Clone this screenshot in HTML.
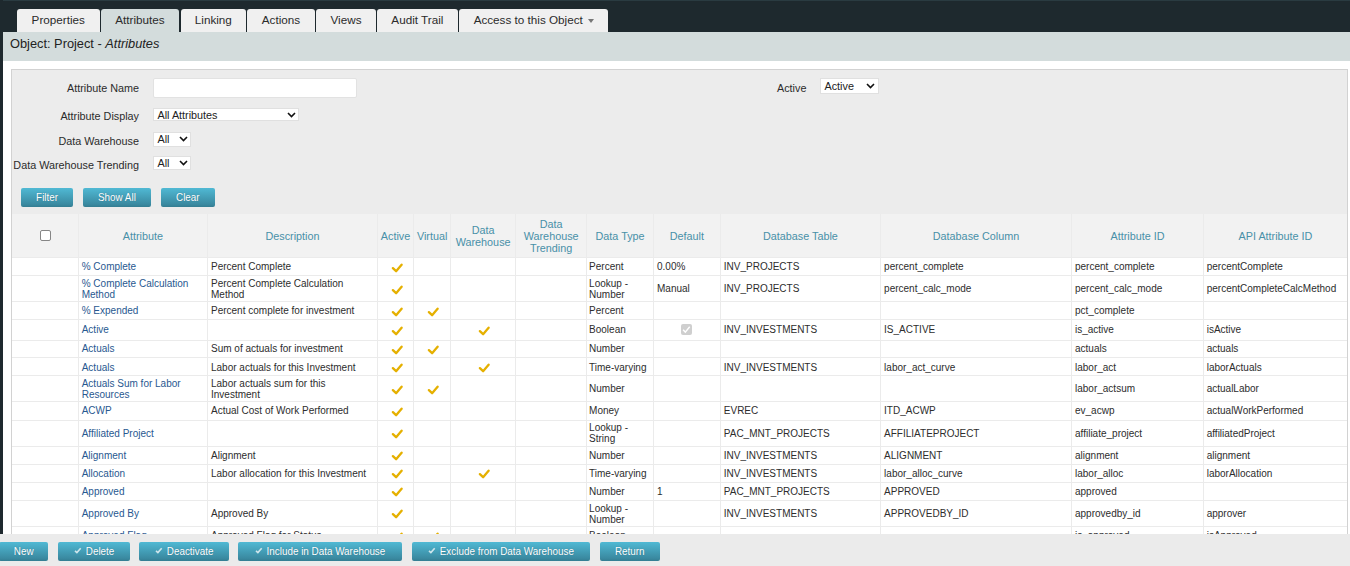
<!DOCTYPE html><html><head><meta charset="utf-8"><style>
*{margin:0;padding:0;box-sizing:border-box}
html,body{width:1350px;height:566px;overflow:hidden;background:#fff;font-family:"Liberation Sans",sans-serif;color:#2d2d2d}
.a{position:absolute}
.tab{position:absolute;top:9px;height:23px;background:#f0f0f0;border-radius:3px 3px 0 0;font-size:11.7px;color:#2b2b2b;text-align:center;line-height:22px;white-space:nowrap}
.lbl{position:absolute;font-size:10.8px;color:#2b2b2b;white-space:nowrap;line-height:12px}
.sel{position:absolute;background:#fff;border:1px solid #e0e0e0;font-size:10.8px;color:#222;white-space:nowrap;line-height:12px}
.bt{display:inline-block;position:relative;top:1px;transform:scaleY(1.15);transform-origin:50% 70%}
.btn{position:absolute;height:19px;border-radius:2px;background:linear-gradient(#50b9d4,#3a8aa1 85%,#347d92);color:#fff;font-size:9.9px;text-align:center;line-height:18px;white-space:nowrap;text-shadow:0 0 1px rgba(0,40,60,.35)}
.hc{position:absolute;display:flex;align-items:center;justify-content:center;text-align:center;font-size:10.8px;line-height:12px;color:#4890a8}
.c{position:absolute;display:flex;align-items:center;font-size:10px;line-height:11px;color:#2d2d2d;padding-left:3.5px;white-space:nowrap;overflow:hidden}
.lk{color:#285890}
.vl{position:absolute;width:1px;background:#ebebeb}
.hl{position:absolute;height:1px;background:#ebebeb}
.chk{position:absolute;width:12px;height:10px}
</style></head><body>
<div class="a" style="left:0;top:0;width:1350px;height:32px;background:#1e292e"></div>
<div class="a" style="left:0;top:0;width:1350px;height:1px;background:#2a3b41"></div>
<div class="a" style="left:0;top:0;width:3px;height:534px;background:#1e292e"></div>
<div class="tab" style="left:17px;width:82.5px;background:#f0f0f0">Properties</div>
<div class="tab" style="left:101px;width:78px;background:#d3dcdc">Attributes</div>
<div class="tab" style="left:180.7px;width:65.30000000000001px;background:#f0f0f0">Linking</div>
<div class="tab" style="left:247px;width:68px;background:#f0f0f0">Actions</div>
<div class="tab" style="left:316px;width:60px;background:#f0f0f0">Views</div>
<div class="tab" style="left:377px;width:80.69999999999999px;background:#f0f0f0">Audit Trail</div>
<div class="tab" style="left:459px;width:149.39999999999998px;background:#f0f0f0">Access to this Object<span style="display:inline-block;width:0;height:0;border-left:3.5px solid transparent;border-right:3.5px solid transparent;border-top:4px solid #777;margin-left:5px;vertical-align:1.3px"></span></div>
<div class="a" style="left:3px;top:32px;width:1347px;height:29px;background:#d3dcdc"></div>
<div class="a" style="left:10px;top:37px;font-size:12.8px;line-height:14px;color:#222;white-space:nowrap">Object: Project - <i>Attributes</i></div>
<div class="a" style="left:11px;top:69px;width:1337px;height:480px;background:#ececec;border:1px solid #d2d2d2"></div>
<div class="lbl" style="right:1211px;top:81.89999999999999px">Attribute Name</div>
<div class="lbl" style="right:1211px;top:110.1px">Attribute Display</div>
<div class="lbl" style="right:1211px;top:134.9px">Data Warehouse</div>
<div class="lbl" style="right:1211px;top:158.79999999999998px">Data Warehouse Trending</div>
<div class="lbl" style="left:777px;top:81.8px">Active</div>
<div class="a" style="left:152.5px;top:78px;width:204.5px;height:19.5px;background:#fff;border:1px solid #e2e2e2;border-radius:2px"></div>
<div class="sel" style="left:153px;top:107.6px;width:146.39999999999998px;height:13.900000000000006px"><span class="a" style="left:3.5px;top:-0.04999999999999716px">All Attributes</span></div>
<svg class="a" style="left:287.2px;top:111.55px" width="9" height="6" viewBox="0 0 9 6"><path d="M1 1 L4.5 4.5 L8 1" fill="none" stroke="#111" stroke-width="1.6"/></svg>
<div class="sel" style="left:153px;top:131.8px;width:38.400000000000006px;height:14.899999999999977px"><span class="a" style="left:3.5px;top:0.44999999999998863px">All</span></div>
<svg class="a" style="left:179px;top:136.25px" width="9" height="6" viewBox="0 0 9 6"><path d="M1 1 L4.5 4.5 L8 1" fill="none" stroke="#111" stroke-width="1.6"/></svg>
<div class="sel" style="left:153px;top:156px;width:38.400000000000006px;height:14.300000000000011px"><span class="a" style="left:3.5px;top:0.15000000000000568px">All</span></div>
<svg class="a" style="left:179px;top:160.15px" width="9" height="6" viewBox="0 0 9 6"><path d="M1 1 L4.5 4.5 L8 1" fill="none" stroke="#111" stroke-width="1.6"/></svg>
<div class="sel" style="left:820px;top:78px;width:58.5px;height:15.5px"><span class="a" style="left:3.5px;top:0.75px">Active</span></div>
<svg class="a" style="left:865.8px;top:82.75px" width="9" height="6" viewBox="0 0 9 6"><path d="M1 1 L4.5 4.5 L8 1" fill="none" stroke="#111" stroke-width="1.6"/></svg>
<div class="btn" style="left:21.1px;top:188px;width:51.99999999999999px"><span class="bt">Filter</span></div>
<div class="btn" style="left:82.8px;top:188px;width:68.2px"><span class="bt">Show All</span></div>
<div class="btn" style="left:160.7px;top:188px;width:54.30000000000001px"><span class="bt">Clear</span></div>
<div class="a" style="left:12px;top:214px;width:1335px;height:43.5px;background:#f2f2f2"></div>
<div class="a" style="left:12px;top:257.5px;width:1335px;height:276.5px;background:#fff"></div>
<div class="a" style="left:39.6px;top:230px;width:11.3px;height:11px;border:1px solid #868686;border-radius:2px;background:#fff"></div>
<div class="hc" style="left:78.2px;top:214px;width:129.3px;height:43.5px">Attribute</div>
<div class="hc" style="left:207.5px;top:214px;width:170.0px;height:43.5px">Description</div>
<div class="hc" style="left:377.5px;top:214px;width:36.10000000000002px;height:43.5px">Active</div>
<div class="hc" style="left:413.6px;top:214px;width:37.099999999999966px;height:43.5px">Virtual</div>
<div class="hc" style="left:450.7px;top:214px;width:64.90000000000003px;height:43.5px">Data<br>Warehouse</div>
<div class="hc" style="left:515.6px;top:214px;width:71.10000000000002px;height:43.5px">Data<br>Warehouse<br>Trending</div>
<div class="hc" style="left:586.7px;top:214px;width:66.79999999999995px;height:43.5px">Data Type</div>
<div class="hc" style="left:653.5px;top:214px;width:66.79999999999995px;height:43.5px">Default</div>
<div class="hc" style="left:720.3px;top:214px;width:160.30000000000007px;height:43.5px">Database Table</div>
<div class="hc" style="left:880.6px;top:214px;width:190.89999999999998px;height:43.5px">Database Column</div>
<div class="hc" style="left:1071.5px;top:214px;width:132.0px;height:43.5px">Attribute ID</div>
<div class="hc" style="left:1203.5px;top:214px;width:144.0px;height:43.5px">API Attribute ID</div>
<div class="c lk" style="left:78.2px;top:257.5px;width:129.3px;height:18.0px;padding-left:3.5px"><span>% Complete</span></div><div class="c" style="left:207.5px;top:257.5px;width:170.0px;height:18.0px;padding-left:3.5px"><span>Percent Complete</span></div><svg class="a" style="left:390.75px;top:262.5px" width="12" height="10" viewBox="0 0 12 10"><path d="M1.9 5.1 L5.1 8.2 L10.6 1.7" fill="none" stroke="#e5b000" stroke-width="2.3" stroke-linecap="round" stroke-linejoin="round"/></svg><div class="c" style="left:586.7px;top:257.5px;width:66.79999999999995px;height:18.0px;padding-left:2.4px"><span>Percent</span></div><div class="c" style="left:653.5px;top:257.5px;width:66.79999999999995px;height:18.0px;padding-left:3.5px"><span>0.00%</span></div><div class="c" style="left:720.3px;top:257.5px;width:160.30000000000007px;height:18.0px;padding-left:3.5px"><span>INV_PROJECTS</span></div><div class="c" style="left:880.6px;top:257.5px;width:190.89999999999998px;height:18.0px;padding-left:3.5px"><span>percent_complete</span></div><div class="c" style="left:1071.5px;top:257.5px;width:132.0px;height:18.0px;padding-left:3.5px"><span>percent_complete</span></div><div class="c" style="left:1203.5px;top:257.5px;width:144.0px;height:18.0px;padding-left:3.2px"><span>percentComplete</span></div><div class="c lk" style="left:78.2px;top:275.5px;width:129.3px;height:26.0px;padding-left:3.5px"><span>% Complete Calculation<br>Method</span></div><div class="c" style="left:207.5px;top:275.5px;width:170.0px;height:26.0px;padding-left:3.5px"><span>Percent Complete Calculation<br>Method</span></div><svg class="a" style="left:390.75px;top:284.5px" width="12" height="10" viewBox="0 0 12 10"><path d="M1.9 5.1 L5.1 8.2 L10.6 1.7" fill="none" stroke="#e5b000" stroke-width="2.3" stroke-linecap="round" stroke-linejoin="round"/></svg><div class="c" style="left:586.7px;top:275.5px;width:66.79999999999995px;height:26.0px;padding-left:2.4px"><span>Lookup -<br>Number</span></div><div class="c" style="left:653.5px;top:275.5px;width:66.79999999999995px;height:26.0px;padding-left:3.5px"><span>Manual</span></div><div class="c" style="left:720.3px;top:275.5px;width:160.30000000000007px;height:26.0px;padding-left:3.5px"><span>INV_PROJECTS</span></div><div class="c" style="left:880.6px;top:275.5px;width:190.89999999999998px;height:26.0px;padding-left:3.5px"><span>percent_calc_mode</span></div><div class="c" style="left:1071.5px;top:275.5px;width:132.0px;height:26.0px;padding-left:3.5px"><span>percent_calc_mode</span></div><div class="c" style="left:1203.5px;top:275.5px;width:144.0px;height:26.0px;padding-left:3.2px"><span>percentCompleteCalcMethod</span></div><div class="c lk" style="left:78.2px;top:301.5px;width:129.3px;height:18.0px;padding-left:3.5px"><span>% Expended</span></div><div class="c" style="left:207.5px;top:301.5px;width:170.0px;height:18.0px;padding-left:3.5px"><span>Percent complete for investment</span></div><svg class="a" style="left:390.75px;top:306.5px" width="12" height="10" viewBox="0 0 12 10"><path d="M1.9 5.1 L5.1 8.2 L10.6 1.7" fill="none" stroke="#e5b000" stroke-width="2.3" stroke-linecap="round" stroke-linejoin="round"/></svg><svg class="a" style="left:427.34999999999997px;top:306.5px" width="12" height="10" viewBox="0 0 12 10"><path d="M1.9 5.1 L5.1 8.2 L10.6 1.7" fill="none" stroke="#e5b000" stroke-width="2.3" stroke-linecap="round" stroke-linejoin="round"/></svg><div class="c" style="left:586.7px;top:301.5px;width:66.79999999999995px;height:18.0px;padding-left:2.4px"><span>Percent</span></div><div class="c" style="left:1071.5px;top:301.5px;width:132.0px;height:18.0px;padding-left:3.5px"><span>pct_complete</span></div><div class="c lk" style="left:78.2px;top:318.7px;width:129.3px;height:21.0px;padding-left:3.5px"><span>Active</span></div><svg class="a" style="left:390.75px;top:326.0px" width="12" height="10" viewBox="0 0 12 10"><path d="M1.9 5.1 L5.1 8.2 L10.6 1.7" fill="none" stroke="#e5b000" stroke-width="2.3" stroke-linecap="round" stroke-linejoin="round"/></svg><svg class="a" style="left:478.34999999999997px;top:326.0px" width="12" height="10" viewBox="0 0 12 10"><path d="M1.9 5.1 L5.1 8.2 L10.6 1.7" fill="none" stroke="#e5b000" stroke-width="2.3" stroke-linecap="round" stroke-linejoin="round"/></svg><div class="c" style="left:586.7px;top:318.7px;width:66.79999999999995px;height:21.0px;padding-left:2.4px"><span>Boolean</span></div><div class="a" style="left:681px;top:323.7px;width:11px;height:11px;background:#cfcfcf;border-radius:2px"></div><svg class="a" style="left:681px;top:323.7px" width="11" height="11" viewBox="0 0 11 11"><path d="M2.1 5.8 L4.3 8.1 L8.7 2.7" fill="none" stroke="#fff" stroke-width="1.4"/></svg><div class="c" style="left:720.3px;top:318.7px;width:160.30000000000007px;height:21.0px;padding-left:3.5px"><span>INV_INVESTMENTS</span></div><div class="c" style="left:880.6px;top:318.7px;width:190.89999999999998px;height:21.0px;padding-left:3.5px"><span>IS_ACTIVE</span></div><div class="c" style="left:1071.5px;top:318.7px;width:132.0px;height:21.0px;padding-left:3.5px"><span>is_active</span></div><div class="c" style="left:1203.5px;top:318.7px;width:144.0px;height:21.0px;padding-left:3.2px"><span>isActive</span></div><div class="c lk" style="left:78.2px;top:340.0px;width:129.3px;height:17.19999999999999px;padding-left:3.5px"><span>Actuals</span></div><div class="c" style="left:207.5px;top:340.0px;width:170.0px;height:17.19999999999999px;padding-left:3.5px"><span>Sum of actuals for investment</span></div><svg class="a" style="left:390.75px;top:345.1px" width="12" height="10" viewBox="0 0 12 10"><path d="M1.9 5.1 L5.1 8.2 L10.6 1.7" fill="none" stroke="#e5b000" stroke-width="2.3" stroke-linecap="round" stroke-linejoin="round"/></svg><svg class="a" style="left:427.34999999999997px;top:345.1px" width="12" height="10" viewBox="0 0 12 10"><path d="M1.9 5.1 L5.1 8.2 L10.6 1.7" fill="none" stroke="#e5b000" stroke-width="2.3" stroke-linecap="round" stroke-linejoin="round"/></svg><div class="c" style="left:586.7px;top:340.0px;width:66.79999999999995px;height:17.19999999999999px;padding-left:2.4px"><span>Number</span></div><div class="c" style="left:1071.5px;top:340.0px;width:132.0px;height:17.19999999999999px;padding-left:3.5px"><span>actuals</span></div><div class="c" style="left:1203.5px;top:340.0px;width:144.0px;height:17.19999999999999px;padding-left:3.2px"><span>actuals</span></div><div class="c lk" style="left:78.2px;top:358.2px;width:129.3px;height:17.80000000000001px;padding-left:3.5px"><span>Actuals</span></div><div class="c" style="left:207.5px;top:358.2px;width:170.0px;height:17.80000000000001px;padding-left:3.5px"><span>Labor actuals for this Investment</span></div><svg class="a" style="left:390.75px;top:362.6px" width="12" height="10" viewBox="0 0 12 10"><path d="M1.9 5.1 L5.1 8.2 L10.6 1.7" fill="none" stroke="#e5b000" stroke-width="2.3" stroke-linecap="round" stroke-linejoin="round"/></svg><svg class="a" style="left:478.34999999999997px;top:362.6px" width="12" height="10" viewBox="0 0 12 10"><path d="M1.9 5.1 L5.1 8.2 L10.6 1.7" fill="none" stroke="#e5b000" stroke-width="2.3" stroke-linecap="round" stroke-linejoin="round"/></svg><div class="c" style="left:586.7px;top:358.2px;width:66.79999999999995px;height:17.80000000000001px;padding-left:2.4px"><span>Time-varying</span></div><div class="c" style="left:720.3px;top:358.2px;width:160.30000000000007px;height:17.80000000000001px;padding-left:3.5px"><span>INV_INVESTMENTS</span></div><div class="c" style="left:880.6px;top:358.2px;width:190.89999999999998px;height:17.80000000000001px;padding-left:3.5px"><span>labor_act_curve</span></div><div class="c" style="left:1071.5px;top:358.2px;width:132.0px;height:17.80000000000001px;padding-left:3.5px"><span>labor_act</span></div><div class="c" style="left:1203.5px;top:358.2px;width:144.0px;height:17.80000000000001px;padding-left:3.2px"><span>laborActuals</span></div><div class="c lk" style="left:78.2px;top:375.5px;width:129.3px;height:26.0px;padding-left:3.5px"><span>Actuals Sum for Labor<br>Resources</span></div><div class="c" style="left:207.5px;top:375.5px;width:170.0px;height:26.0px;padding-left:3.5px"><span>Labor actuals sum for this<br>Investment</span></div><svg class="a" style="left:390.75px;top:384.5px" width="12" height="10" viewBox="0 0 12 10"><path d="M1.9 5.1 L5.1 8.2 L10.6 1.7" fill="none" stroke="#e5b000" stroke-width="2.3" stroke-linecap="round" stroke-linejoin="round"/></svg><svg class="a" style="left:427.34999999999997px;top:384.5px" width="12" height="10" viewBox="0 0 12 10"><path d="M1.9 5.1 L5.1 8.2 L10.6 1.7" fill="none" stroke="#e5b000" stroke-width="2.3" stroke-linecap="round" stroke-linejoin="round"/></svg><div class="c" style="left:586.7px;top:375.5px;width:66.79999999999995px;height:26.0px;padding-left:2.4px"><span>Number</span></div><div class="c" style="left:1071.5px;top:375.5px;width:132.0px;height:26.0px;padding-left:3.5px"><span>labor_actsum</span></div><div class="c" style="left:1203.5px;top:375.5px;width:144.0px;height:26.0px;padding-left:3.2px"><span>actualLabor</span></div><div class="c lk" style="left:78.2px;top:401.2px;width:129.3px;height:18.5px;padding-left:3.5px"><span>ACWP</span></div><div class="c" style="left:207.5px;top:401.2px;width:170.0px;height:18.5px;padding-left:3.5px"><span>Actual Cost of Work Performed</span></div><svg class="a" style="left:390.75px;top:406.75px" width="12" height="10" viewBox="0 0 12 10"><path d="M1.9 5.1 L5.1 8.2 L10.6 1.7" fill="none" stroke="#e5b000" stroke-width="2.3" stroke-linecap="round" stroke-linejoin="round"/></svg><div class="c" style="left:586.7px;top:401.2px;width:66.79999999999995px;height:18.5px;padding-left:2.4px"><span>Money</span></div><div class="c" style="left:720.3px;top:401.2px;width:160.30000000000007px;height:18.5px;padding-left:3.5px"><span>EVREC</span></div><div class="c" style="left:880.6px;top:401.2px;width:190.89999999999998px;height:18.5px;padding-left:3.5px"><span>ITD_ACWP</span></div><div class="c" style="left:1071.5px;top:401.2px;width:132.0px;height:18.5px;padding-left:3.5px"><span>ev_acwp</span></div><div class="c" style="left:1203.5px;top:401.2px;width:144.0px;height:18.5px;padding-left:3.2px"><span>actualWorkPerformed</span></div><div class="c lk" style="left:78.2px;top:420px;width:129.3px;height:26.399999999999977px;padding-left:3.5px"><span>Affiliated Project</span></div><svg class="a" style="left:390.75px;top:429.2px" width="12" height="10" viewBox="0 0 12 10"><path d="M1.9 5.1 L5.1 8.2 L10.6 1.7" fill="none" stroke="#e5b000" stroke-width="2.3" stroke-linecap="round" stroke-linejoin="round"/></svg><div class="c" style="left:586.7px;top:420px;width:66.79999999999995px;height:26.399999999999977px;padding-left:2.4px"><span>Lookup -<br>String</span></div><div class="c" style="left:720.3px;top:420px;width:160.30000000000007px;height:26.399999999999977px;padding-left:3.5px"><span>PAC_MNT_PROJECTS</span></div><div class="c" style="left:880.6px;top:420px;width:190.89999999999998px;height:26.399999999999977px;padding-left:3.5px"><span>AFFILIATEPROJECT</span></div><div class="c" style="left:1071.5px;top:420px;width:132.0px;height:26.399999999999977px;padding-left:3.5px"><span>affiliate_project</span></div><div class="c" style="left:1203.5px;top:420px;width:144.0px;height:26.399999999999977px;padding-left:3.2px"><span>affiliatedProject</span></div><div class="c lk" style="left:78.2px;top:446.4px;width:129.3px;height:17.600000000000023px;padding-left:3.5px"><span>Alignment</span></div><div class="c" style="left:207.5px;top:446.4px;width:170.0px;height:17.600000000000023px;padding-left:3.5px"><span>Alignment</span></div><svg class="a" style="left:390.75px;top:451.2px" width="12" height="10" viewBox="0 0 12 10"><path d="M1.9 5.1 L5.1 8.2 L10.6 1.7" fill="none" stroke="#e5b000" stroke-width="2.3" stroke-linecap="round" stroke-linejoin="round"/></svg><div class="c" style="left:586.7px;top:446.4px;width:66.79999999999995px;height:17.600000000000023px;padding-left:2.4px"><span>Number</span></div><div class="c" style="left:720.3px;top:446.4px;width:160.30000000000007px;height:17.600000000000023px;padding-left:3.5px"><span>INV_INVESTMENTS</span></div><div class="c" style="left:880.6px;top:446.4px;width:190.89999999999998px;height:17.600000000000023px;padding-left:3.5px"><span>ALIGNMENT</span></div><div class="c" style="left:1071.5px;top:446.4px;width:132.0px;height:17.600000000000023px;padding-left:3.5px"><span>alignment</span></div><div class="c" style="left:1203.5px;top:446.4px;width:144.0px;height:17.600000000000023px;padding-left:3.2px"><span>alignment</span></div><div class="c lk" style="left:78.2px;top:464px;width:129.3px;height:18px;padding-left:3.5px"><span>Allocation</span></div><div class="c" style="left:207.5px;top:464px;width:170.0px;height:18px;padding-left:3.5px"><span>Labor allocation for this Investment</span></div><svg class="a" style="left:390.75px;top:469.0px" width="12" height="10" viewBox="0 0 12 10"><path d="M1.9 5.1 L5.1 8.2 L10.6 1.7" fill="none" stroke="#e5b000" stroke-width="2.3" stroke-linecap="round" stroke-linejoin="round"/></svg><svg class="a" style="left:478.34999999999997px;top:469.0px" width="12" height="10" viewBox="0 0 12 10"><path d="M1.9 5.1 L5.1 8.2 L10.6 1.7" fill="none" stroke="#e5b000" stroke-width="2.3" stroke-linecap="round" stroke-linejoin="round"/></svg><div class="c" style="left:586.7px;top:464px;width:66.79999999999995px;height:18px;padding-left:2.4px"><span>Time-varying</span></div><div class="c" style="left:720.3px;top:464px;width:160.30000000000007px;height:18px;padding-left:3.5px"><span>INV_INVESTMENTS</span></div><div class="c" style="left:880.6px;top:464px;width:190.89999999999998px;height:18px;padding-left:3.5px"><span>labor_alloc_curve</span></div><div class="c" style="left:1071.5px;top:464px;width:132.0px;height:18px;padding-left:3.5px"><span>labor_alloc</span></div><div class="c" style="left:1203.5px;top:464px;width:144.0px;height:18px;padding-left:3.2px"><span>laborAllocation</span></div><div class="c lk" style="left:78.2px;top:482.5px;width:129.3px;height:18px;padding-left:3.5px"><span>Approved</span></div><svg class="a" style="left:390.75px;top:487.0px" width="12" height="10" viewBox="0 0 12 10"><path d="M1.9 5.1 L5.1 8.2 L10.6 1.7" fill="none" stroke="#e5b000" stroke-width="2.3" stroke-linecap="round" stroke-linejoin="round"/></svg><div class="c" style="left:586.7px;top:482.5px;width:66.79999999999995px;height:18px;padding-left:2.4px"><span>Number</span></div><div class="c" style="left:653.5px;top:482.5px;width:66.79999999999995px;height:18px;padding-left:3.5px"><span>1</span></div><div class="c" style="left:720.3px;top:482.5px;width:160.30000000000007px;height:18px;padding-left:3.5px"><span>PAC_MNT_PROJECTS</span></div><div class="c" style="left:880.6px;top:482.5px;width:190.89999999999998px;height:18px;padding-left:3.5px"><span>APPROVED</span></div><div class="c" style="left:1071.5px;top:482.5px;width:132.0px;height:18px;padding-left:3.5px"><span>approved</span></div><div class="c lk" style="left:78.2px;top:500.5px;width:129.3px;height:26.5px;padding-left:3.5px"><span>Approved By</span></div><div class="c" style="left:207.5px;top:500.5px;width:170.0px;height:26.5px;padding-left:3.5px"><span>Approved By</span></div><svg class="a" style="left:390.75px;top:509.25px" width="12" height="10" viewBox="0 0 12 10"><path d="M1.9 5.1 L5.1 8.2 L10.6 1.7" fill="none" stroke="#e5b000" stroke-width="2.3" stroke-linecap="round" stroke-linejoin="round"/></svg><div class="c" style="left:586.7px;top:500.5px;width:66.79999999999995px;height:26.5px;padding-left:2.4px"><span>Lookup -<br>Number</span></div><div class="c" style="left:720.3px;top:500.5px;width:160.30000000000007px;height:26.5px;padding-left:3.5px"><span>INV_INVESTMENTS</span></div><div class="c" style="left:880.6px;top:500.5px;width:190.89999999999998px;height:26.5px;padding-left:3.5px"><span>APPROVEDBY_ID</span></div><div class="c" style="left:1071.5px;top:500.5px;width:132.0px;height:26.5px;padding-left:3.5px"><span>approvedby_id</span></div><div class="c" style="left:1203.5px;top:500.5px;width:144.0px;height:26.5px;padding-left:3.2px"><span>approver</span></div><div class="c lk" style="left:78.2px;top:526.5px;width:129.3px;height:18.5px;padding-left:3.5px"><span>Approved Flag</span></div><div class="c" style="left:207.5px;top:526.5px;width:170.0px;height:18.5px;padding-left:3.5px"><span>Approved Flag for Status</span></div><svg class="a" style="left:390.75px;top:531.75px" width="12" height="10" viewBox="0 0 12 10"><path d="M1.9 5.1 L5.1 8.2 L10.6 1.7" fill="none" stroke="#e5b000" stroke-width="2.3" stroke-linecap="round" stroke-linejoin="round"/></svg><svg class="a" style="left:427.34999999999997px;top:531.75px" width="12" height="10" viewBox="0 0 12 10"><path d="M1.9 5.1 L5.1 8.2 L10.6 1.7" fill="none" stroke="#e5b000" stroke-width="2.3" stroke-linecap="round" stroke-linejoin="round"/></svg><div class="c" style="left:586.7px;top:526.5px;width:66.79999999999995px;height:18.5px;padding-left:2.4px"><span>Boolean</span></div><div class="c" style="left:1071.5px;top:526.5px;width:132.0px;height:18.5px;padding-left:3.5px"><span>is_approved</span></div><div class="c" style="left:1203.5px;top:526.5px;width:144.0px;height:18.5px;padding-left:3.2px"><span>isApproved</span></div>
<div class="vl" style="left:78px;top:214px;height:320px"></div>
<div class="vl" style="left:207px;top:214px;height:320px"></div>
<div class="vl" style="left:377px;top:214px;height:320px"></div>
<div class="vl" style="left:413px;top:214px;height:320px"></div>
<div class="vl" style="left:450px;top:214px;height:320px"></div>
<div class="vl" style="left:515px;top:214px;height:320px"></div>
<div class="vl" style="left:586px;top:214px;height:320px"></div>
<div class="vl" style="left:653px;top:214px;height:320px"></div>
<div class="vl" style="left:720px;top:214px;height:320px"></div>
<div class="vl" style="left:880px;top:214px;height:320px"></div>
<div class="vl" style="left:1071px;top:214px;height:320px"></div>
<div class="vl" style="left:1203px;top:214px;height:320px"></div>
<div class="hl" style="left:12px;top:257px;width:1335px"></div>
<div class="hl" style="left:12px;top:275px;width:1335px"></div>
<div class="hl" style="left:12px;top:301px;width:1335px"></div>
<div class="hl" style="left:12px;top:319px;width:1335px"></div>
<div class="hl" style="left:12px;top:340px;width:1335px"></div>
<div class="hl" style="left:12px;top:357px;width:1335px"></div>
<div class="hl" style="left:12px;top:375px;width:1335px"></div>
<div class="hl" style="left:12px;top:401px;width:1335px"></div>
<div class="hl" style="left:12px;top:420px;width:1335px"></div>
<div class="hl" style="left:12px;top:446px;width:1335px"></div>
<div class="hl" style="left:12px;top:464px;width:1335px"></div>
<div class="hl" style="left:12px;top:482px;width:1335px"></div>
<div class="hl" style="left:12px;top:500px;width:1335px"></div>
<div class="hl" style="left:12px;top:526px;width:1335px"></div>
<div class="hl" style="left:12px;top:544px;width:1335px"></div>
<div class="vl" style="left:11px;top:214px;height:320px;background:#d2d2d2"></div>
<div class="vl" style="left:1347px;top:214px;height:320px;background:#d2d2d2"></div>
<div class="a" style="left:0;top:534px;width:1350px;height:32px;background:#ebebeb"></div>
<div class="btn" style="left:-1px;top:542px;width:49.4px"><span class="bt">New</span></div>
<div class="btn" style="left:58.3px;top:542px;width:71.50000000000001px"><svg style="display:inline-block;vertical-align:0px;margin-right:4px" width="8" height="7" viewBox="0 0 8 7"><path d="M1 3.8 L2.9 5.6 L6.7 1.2" fill="none" stroke="#cfe6ec" stroke-width="1.6"/></svg><span class="bt">Delete</span></div>
<div class="btn" style="left:139px;top:542px;width:90.30000000000001px"><svg style="display:inline-block;vertical-align:0px;margin-right:4px" width="8" height="7" viewBox="0 0 8 7"><path d="M1 3.8 L2.9 5.6 L6.7 1.2" fill="none" stroke="#cfe6ec" stroke-width="1.6"/></svg><span class="bt">Deactivate</span></div>
<div class="btn" style="left:238.1px;top:542px;width:163.70000000000002px"><svg style="display:inline-block;vertical-align:0px;margin-right:4px" width="8" height="7" viewBox="0 0 8 7"><path d="M1 3.8 L2.9 5.6 L6.7 1.2" fill="none" stroke="#cfe6ec" stroke-width="1.6"/></svg><span class="bt">Include in Data Warehouse</span></div>
<div class="btn" style="left:411.5px;top:542px;width:178.70000000000005px"><svg style="display:inline-block;vertical-align:0px;margin-right:4px" width="8" height="7" viewBox="0 0 8 7"><path d="M1 3.8 L2.9 5.6 L6.7 1.2" fill="none" stroke="#cfe6ec" stroke-width="1.6"/></svg><span class="bt">Exclude from Data Warehouse</span></div>
<div class="btn" style="left:600px;top:542px;width:59.60000000000002px"><span class="bt">Return</span></div>
</body></html>
